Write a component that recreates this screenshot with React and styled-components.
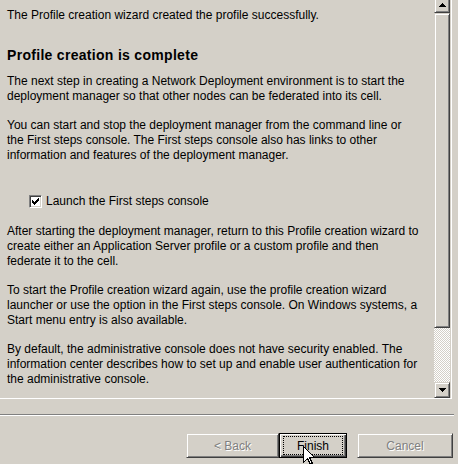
import React from "react";
import styled, { createGlobalStyle } from "styled-components";

const GlobalStyle = createGlobalStyle`
  html, body {
    margin: 0;
    padding: 0;
    background: #d4d0c8;
    overflow: hidden;
  }
  body {
    font-family: "Liberation Sans", Arial, sans-serif;
    font-size: 12px;
    color: #000;
  }
`;

const paragraphs = [
  [
    "You can start and stop the deployment manager from the command line or",
    "the First steps console. The First steps console also has links to other",
    "information and features of the deployment manager.",
  ],
];

const afterCheck = [
  [
    "After starting the deployment manager, return to this Profile creation wizard to",
    "create either an Application Server profile or a custom profile and then",
    "federate it to the cell.",
  ],
  [
    "To start the Profile creation wizard again, use the profile creation wizard",
    "launcher or use the option in the First steps console. On Windows systems, a",
    "Start menu entry is also available.",
  ],
  [
    "By default, the administrative console does not have security enabled. The",
    "information center describes how to set up and enable user authentication for",
    "the administrative console.",
  ],
];

function Lines({ lines }) {
  return lines.map((l, i) => <Line key={i}>{l}</Line>);
}

export default function App() {
  return (
    <Window>
      <GlobalStyle />
      <Pane>
        <Content>
          <Line>The Profile creation wizard created the profile successfully.</Line>
          <Heading>Profile creation is complete</Heading>
          <Para $top={10}>
            <Lines
              lines={[
                "The next step in creating a Network Deployment environment is to start the",
                "deployment manager so that other nodes can be federated into its cell.",
              ]}
            />
          </Para>
          {paragraphs.map((p, i) => (
            <Para key={i} $top={14}>
              <Lines lines={p} />
            </Para>
          ))}
          <CheckRow>
            <CheckBox>
              <svg width="7" height="7" viewBox="0 0 7 7" shapeRendering="crispEdges">
                <path d="M0 2h1v1h1v1h1V3h1V2h1V1h1V0h1v3H6v1H5v1H4v1H3v1H2V6H1V5H0z" fill="#000" />
              </svg>
            </CheckBox>
            <span>Launch the First steps console</span>
          </CheckRow>
          {afterCheck.map((p, i) => (
            <Para key={i} $top={i === 0 ? 15 : 14}>
              <Lines lines={p} />
            </Para>
          ))}
        </Content>
        <ScrollBar>
          <ArrowButton>
            <svg width="7" height="4" viewBox="0 0 7 4" shapeRendering="crispEdges">
              <path d="M3 0h1v1h1v1h1v1h1v1H0V3h1V2h1V1h1z" fill="#000" />
            </svg>
          </ArrowButton>
          <Thumb />
          <Track />
          <ArrowButton>
            <svg width="7" height="4" viewBox="0 0 7 4" shapeRendering="crispEdges">
              <path d="M0 0h7v1H6v1H5v1H4v1H3V3H2V2H1V1H0z" fill="#000" />
            </svg>
          </ArrowButton>
        </ScrollBar>
      </Pane>
      <Separator />
      <ButtonBar>
        <Button $width={93} disabled>&lt; Back</Button>
        <DefaultButton $width={68}>
          <Focus>Finish</Focus>
          <Cursor width="12" height="20" viewBox="0 0 12 20" shapeRendering="crispEdges">
            <path
              d="M0.5 0.5 L0.5 16.5 L4.5 12.5 L7.5 18.5 L9.5 17.5 L6.5 11.5 L11.5 11.5 Z"
              fill="#fff"
              stroke="#000"
              strokeWidth="1"
            />
          </Cursor>
        </DefaultButton>
        <Button $width={96} $gap={10} disabled>Cancel</Button>
      </ButtonBar>
    </Window>
  );
}

const Window = styled.div`
  width: 458px;
  height: 464px;
  display: flex;
  flex-direction: column;
`;

const Pane = styled.div`
  box-sizing: border-box;
  width: 452px;
  height: 403px;
  margin-top: -4px;
  display: flex;
  border-top: 1px solid #808080;
  border-bottom: 1px solid #fff;
  border-right: 1px solid #fff;
  box-shadow: inset 0 1px 0 #404040, inset -1px -1px 0 #d4d0c8;
  overflow: hidden;
`;

const Content = styled.div`
  flex: 1;
  padding: 11px 0 0 7px;
  display: flex;
  flex-direction: column;
  white-space: nowrap;
`;

const Line = styled.div`
  line-height: 15px;
  height: 15px;
`;

const Heading = styled.div`
  margin-top: 24px;
  font-size: 14px;
  font-weight: bold;
  line-height: 17px;
  letter-spacing: 0.3px;
`;

const Para = styled.div`
  margin-top: ${(p) => p.$top}px;
`;

const CheckRow = styled.label`
  margin-top: 31px;
  margin-left: 22px;
  height: 15px;
  line-height: 15px;
  display: flex;
  align-items: center;
  gap: 4px;
`;

const CheckBox = styled.span`
  box-sizing: border-box;
  width: 13px;
  height: 13px;
  background: #fff;
  border-top: 1px solid #808080;
  border-left: 1px solid #808080;
  border-right: 1px solid #fff;
  border-bottom: 1px solid #fff;
  box-shadow: inset 1px 1px 0 #404040, inset -1px -1px 0 #d4d0c8;
  display: flex;
  align-items: center;
  justify-content: center;
`;

const ScrollBar = styled.div`
  width: 16px;
  margin-right: 1px;
  display: flex;
  flex-direction: column;
  flex-shrink: 0;
`;

const raised = `
  box-sizing: border-box;
  background: #d4d0c8;
  border-top: 1px solid #d4d0c8;
  border-left: 1px solid #d4d0c8;
  border-right: 1px solid #404040;
  border-bottom: 1px solid #404040;
  box-shadow: inset 1px 1px 0 #fff, inset -1px -1px 0 #808080;
`;

const ArrowButton = styled.div`
  ${raised}
  height: 16px;
  display: flex;
  align-items: center;
  justify-content: center;
`;

const Thumb = styled.div`
  ${raised}
  height: 315px;
`;

const Track = styled.div`
  flex: 1;
  background-color: #d4d0c8;
  background-image: conic-gradient(#fff 25%, #d4d0c8 0 50%, #fff 0 75%, #d4d0c8 0);
  background-size: 2px 2px;
`;

const Separator = styled.div`
  width: 454px;
  margin-top: 15px;
  border-top: 1px solid #808080;
  border-bottom: 1px solid #fff;
`;

const ButtonBar = styled.div`
  margin-top: 17px;
  padding-right: 5px;
  display: flex;
  justify-content: flex-end;
`;

const Button = styled.button`
  ${raised}
  width: ${(p) => p.$width}px;
  height: 25px;
  margin: 0 0 0 ${(p) => p.$gap || 0}px;
  padding: 0;
  font-family: "Liberation Sans", Arial, sans-serif;
  font-size: 12px;
  color: #000;
  &:disabled {
    color: #808080;
    text-shadow: 1px 1px 0 #fff;
  }
`;

const DefaultButton = styled(Button)`
  position: relative;
  border: 1px solid #000;
  box-shadow: inset 1px 1px 0 #fff, inset -1px -1px 0 #404040, inset -2px -2px 0 #808080;
  padding: 3px 4px;
  display: flex;
`;

const Focus = styled.span`
  flex: 1;
  display: flex;
  align-items: center;
  justify-content: center;
  outline: 1px dotted #000;
`;

const Cursor = styled.svg`
  position: absolute;
  left: 23px;
  top: 12px;
`;
